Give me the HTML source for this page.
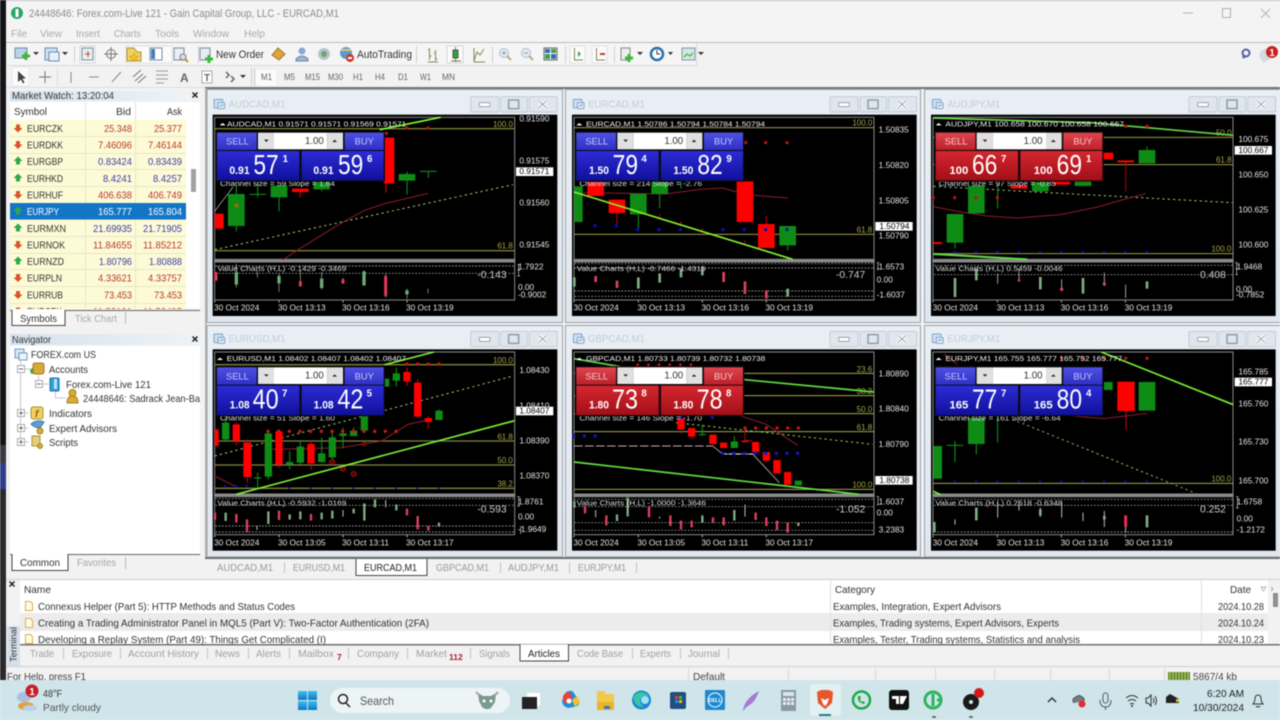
<!DOCTYPE html>
<html lang="en"><head><meta charset="utf-8"><title>Forex.com-Live 121</title>
<style>
html,body{margin:0;padding:0;background:#f2f2f2;width:1280px;height:720px;overflow:hidden}
svg{position:absolute;left:0;top:0;font-family:"Liberation Sans",sans-serif;filter:blur(.4px)}
.t{font-size:10.5px;fill:#333}
.g{font-size:10.5px;fill:#9a9a9a}
.m{font-size:10.5px;fill:#a9a9a9}
.ax{font-size:25px;fill:#e4e4e4}
.hd{font-size:23px;fill:#eee}
.vc{font-size:23px;fill:#ddd}
.val{font-size:31px;fill:#ccc}
.lb{font-size:24px;fill:#a6a64a}
.ti{font-size:29px;fill:#c3ccd5}
.cs{font-size:23px;fill:#ddd}
.pr{font-size:34px;fill:#fff;font-weight:bold;text-anchor:end}
.big{font-size:84px;fill:#fff}
.sup{font-size:29px;fill:#fff;font-weight:bold}
.btn{font-size:28px}
.r{fill:#b8392c;text-anchor:end}.b{fill:#3c3cab;text-anchor:end}
.w{fill:#fff}
.up{fill:#2fa84a}.dn{fill:#d9532c}
</style></head><body>
<svg width="1280" height="720" viewBox="0 0 1280 720" xmlns="http://www.w3.org/2000/svg">
<defs>
<linearGradient id="fr" x1="0" y1="0" x2="0" y2="1"><stop offset="0" stop-color="#e9eff5"/><stop offset="1" stop-color="#dfe6ee"/></linearGradient>
<linearGradient id="hdr" x1="0" y1="0" x2="1" y2="0"><stop offset="0" stop-color="#d5e2ee"/><stop offset="1" stop-color="#eef3f7"/></linearGradient>
<linearGradient id="bb" x1="0" y1="0" x2="0" y2="1"><stop offset="0" stop-color="#4f50e4"/><stop offset="1" stop-color="#2f30c4"/></linearGradient>
<linearGradient id="bl" x1="0" y1="0" x2="0" y2="1"><stop offset="0" stop-color="#2c2cd6"/><stop offset="1" stop-color="#10109c"/></linearGradient>
<linearGradient id="rb" x1="0" y1="0" x2="0" y2="1"><stop offset="0" stop-color="#dd4650"/><stop offset="1" stop-color="#bd2029"/></linearGradient>
<linearGradient id="rl" x1="0" y1="0" x2="0" y2="1"><stop offset="0" stop-color="#d52730"/><stop offset="1" stop-color="#a20f18"/></linearGradient>
<linearGradient id="win" x1="0" y1="0" x2="0" y2="1"><stop offset="0" stop-color="#3fc0f2"/><stop offset="1" stop-color="#1273c4"/></linearGradient>

<g id="wf">
<rect x="14" y="68" width="1034" height="604" fill="#000"/>
<rect x="20" y="76" width="900" height="426" fill="none" stroke="#8a8a8a" stroke-width="3"/>
<rect x="20" y="510" width="900" height="114" fill="none" stroke="#8a8a8a" stroke-width="3"/>
<rect x="18" y="503" width="904" height="6" fill="#8c8c8c"/>
<path d="M20 624v8M213 624v8M405 624v8M597 624v8" stroke="#aaa" stroke-width="3"/>
<g fill="#dfe6ee" stroke="#b4bdc7" stroke-width="2"><rect x="788" y="14" width="84" height="46" rx="3"/><rect x="878" y="14" width="80" height="46" rx="3"/><rect x="964" y="14" width="84" height="46" rx="3"/></g>
<rect x="814" y="32" width="32" height="12" fill="#fff" stroke="#98a2ac" stroke-width="3" rx="2"/>
<rect x="902" y="24" width="30" height="26" fill="none" stroke="#98a2ac" stroke-width="5"/>
<path d="M992 26l24 22M1016 26l-24 22" stroke="#fff" stroke-width="10"/><path d="M992 26l24 22M1016 26l-24 22" stroke="#9aa4ae" stroke-width="3"/>
<rect x="18" y="22" width="26" height="26" fill="#cfdff0" stroke="#7fa4c8" stroke-width="3" rx="2"/><rect x="30" y="32" width="20" height="18" fill="#e8f0f8" stroke="#7fa4c8" stroke-width="3" rx="2"/>
<path d="M35 44l4-5 3 3 4-5" stroke="#5f8fc0" fill="none" stroke-width="2"/>
</g>

<g id="pb">
<rect x="23" y="118" width="508" height="151" fill="#0a0a14"/>
<rect x="27" y="122" width="119" height="52" fill="url(#bb)"/><rect x="410" y="122" width="117" height="52" fill="url(#bb)"/>
<rect x="27" y="177" width="247" height="88" fill="url(#bl)"/><rect x="281" y="177" width="246" height="88" fill="url(#bl)"/>
<rect x="150" y="122" width="48" height="50" fill="#e0e0e0"/><rect x="198" y="122" width="160" height="50" fill="#fff"/><rect x="358" y="122" width="47" height="50" fill="#e0e0e0"/>
<path d="M168 143h14l-7 7zM373 150h14l-7-7z" fill="#222"/>
<text x="54" y="158" class="btn" fill="#c3c9f8">SELL</text><text x="440" y="158" class="btn" fill="#c3c9f8">BUY</text>
<text x="291" y="156" font-size="29" fill="#333">1.00</text>
</g>
<g id="pr">
<rect x="23" y="118" width="508" height="151" fill="#14080a"/>
<rect x="27" y="122" width="119" height="52" fill="url(#rb)"/><rect x="410" y="122" width="117" height="52" fill="url(#rb)"/>
<rect x="27" y="177" width="247" height="88" fill="url(#rl)"/><rect x="281" y="177" width="246" height="88" fill="url(#rl)"/>
<rect x="150" y="122" width="48" height="50" fill="#e0e0e0"/><rect x="198" y="122" width="160" height="50" fill="#fff"/><rect x="358" y="122" width="47" height="50" fill="#e0e0e0"/>
<path d="M168 143h14l-7 7zM373 150h14l-7-7z" fill="#222"/>
<text x="54" y="158" class="btn" fill="#f3c9cc">SELL</text><text x="440" y="158" class="btn" fill="#f3c9cc">BUY</text>
<text x="291" y="156" font-size="29" fill="#333">1.00</text>
</g>
<path id="aup" d="M0 -4.5L4.5 0H2V3.5H-2V0H-4.5Z"/>
<path id="adn" d="M0 4.5L4.5 0H2V-3.5H-2V0H-4.5Z"/>
</defs>

<!-- base -->
<rect width="1280" height="720" fill="#f2f2f2"/>
<rect x="0" y="0" width="6" height="445" fill="#141418"/><rect x="0" y="445" width="6" height="18" fill="#3a3a3e"/><rect x="0" y="463" width="6" height="26" fill="#2f3d8a"/><rect x="0" y="489" width="6" height="192" fill="#2a2a2e"/>
<rect x="6" y="0" width="1274" height="1" fill="#c4c4c4"/>
<rect x="6" y="1" width="1274" height="41" fill="#f4f4f4"/>
<rect x="6" y="42" width="1274" height="1" fill="#bdbdbd"/>

<!-- title -->
<circle cx="17" cy="13" r="6" fill="#27a866"/><path d="M17 9v8" stroke="#fff" stroke-width="3"/>
<text x="29" y="17" font-size="11" fill="#8c8c8c" textLength="310" lengthAdjust="spacingAndGlyphs">24448646: Forex.com-Live 121 - Gain Capital Group, LLC - EURCAD,M1</text>
<path d="M1183 13h10" stroke="#b5b5b5"/><rect x="1222.500" y="8.500" width="8" height="9" fill="none" stroke="#b0b0b0"/><path d="M1261 9l9 9M1270 9l-9 9" stroke="#b5b5b5"/>
<g>
<text x="11" y="37" class="m" textLength="16" lengthAdjust="spacingAndGlyphs">File</text>
<text x="40" y="37" class="m" textLength="22" lengthAdjust="spacingAndGlyphs">View</text>
<text x="76" y="37" class="m" textLength="24" lengthAdjust="spacingAndGlyphs">Insert</text>
<text x="114" y="37" class="m" textLength="27" lengthAdjust="spacingAndGlyphs">Charts</text>
<text x="155" y="37" class="m" textLength="24" lengthAdjust="spacingAndGlyphs">Tools</text>
<text x="193" y="37" class="m" textLength="36" lengthAdjust="spacingAndGlyphs">Window</text>
<text x="244" y="37" class="m" textLength="21" lengthAdjust="spacingAndGlyphs">Help</text>
</g>

<!-- toolbar 1 -->
<rect x="7" y="43" width="689" height="22" fill="#f5f5f5"/><path d="M696.500 43v22M7 65.500h690" stroke="#d8d8d8"/>
<g stroke="#d0d0d0"><path d="M74.500 46v17M198.500 46v17M416.500 46v17M492.500 46v17M565.500 46v17M614.500 46v17"/></g>
<rect x="80" y="46" width="15" height="17" fill="#fbfbfb" stroke="#d5d5d5"/><rect x="126" y="46" width="46" height="17" fill="#fbfbfb" stroke="#e0e0e0"/><rect x="447" y="46" width="16" height="17" fill="#fbfbfb" stroke="#d5d5d5"/><rect x="570" y="46" width="15" height="17" fill="#fbfbfb" stroke="#e0e0e0"/><rect x="592" y="46" width="15" height="17" fill="#fbfbfb" stroke="#e0e0e0"/>
<!-- new chart -->
<rect x="15" y="48" width="12" height="10" fill="#bcd3e8" stroke="#6a8db0"/><path d="M24.500 52h3v2.500h2.500v3h-2.500v2.500h-3v-2.500h-2.500v-3h2.500z" fill="#3fb83f"/>
<path d="M33 52h6l-3 3z" fill="#333"/>
<rect x="45" y="48" width="12" height="12" fill="#cfe0f0" stroke="#6a8db0"/><rect x="49" y="52" width="10" height="9" fill="#e8f0f8" stroke="#6a8db0"/><path d="M62 52h6l-3 3z" fill="#333"/>
<rect x="82" y="48" width="11" height="12" fill="#e8f0e8" stroke="#6a8db0"/><path d="M85 54h5M88 51v6" stroke="#c44"/>
<g fill="none" stroke="#777"><circle cx="111" cy="54" r="4.500"/><path d="M111 47v14M104 54h14"/></g>
<path d="M127 48h7l3 4h4v9h-14z" fill="#f0d060" stroke="#b09030"/><path d="M134 53l1.500 3 3 .4-2.200 2 .6 3-2.900-1.500-2.900 1.500.6-3-2.200-2 3-.4z" fill="#f3c030" stroke="#c09020" stroke-width=".5"/>
<rect x="150" y="48" width="12" height="12" fill="#fff" stroke="#6a8db0"/><rect x="151" y="49" width="4" height="10" fill="#4a7db0"/>
<rect x="174" y="48" width="10" height="12" fill="#e8eef4" stroke="#7a8a9a"/><circle cx="183" cy="57" r="3" fill="#dde" stroke="#7a7a7a"/><path d="M185 59l3 3" stroke="#c09030" stroke-width="2"/>
<rect x="200" y="48" width="10" height="12" fill="#e4ecf4" stroke="#7a8a9a"/><path d="M207.500 55h3v2.500h2.500v3h-2.500v2.500h-3v-2.500h-2.500v-3h2.500z" fill="#3fb83f"/>
<text x="216" y="58" font-size="11" fill="#333" textLength="48" lengthAdjust="spacingAndGlyphs">New Order</text>
<path d="M278 48l7 6-6 6-7-5z" fill="#dba53a" stroke="#a4742a"/>
<circle cx="302" cy="51" r="3.500" fill="#8aa8d8"/><path d="M296 59q6-6 12 0v2h-12z" fill="#9ab4dc" stroke="#6a86b0"/>
<circle cx="324" cy="54" r="6" fill="#b8c4c8"/><circle cx="324" cy="54" r="3" fill="#6da870"/>
<circle cx="346" cy="53" r="6" fill="#5a9ad0"/><path d="M341 50h10" stroke="#e0c870" stroke-width="2"/><circle cx="350" cy="58" r="4" fill="#c83a2a"/><rect x="348" y="57" width="4" height="2" fill="#fff"/>
<text x="357" y="58" font-size="11" fill="#333" textLength="55" lengthAdjust="spacingAndGlyphs">AutoTrading</text>
<g stroke="#8a8458" fill="none"><path d="M429.500 48v12M428 50h1.500M429.500 56h2M435.500 50v11M434 53h1.500M435.500 59h2M428 62h10"/></g>
<path d="M455.500 47v15M451 61h10" stroke="#7a7a50"/><rect x="453" y="50" width="5" height="8" fill="#2fa43a" stroke="#555"/>
<path d="M474 61l3-9 3 3 4-6M474 48v14h11" fill="none" stroke="#8a8458"/>
<g fill="#e4ecf2" stroke="#b0bcc8"><circle cx="504" cy="53" r="4.500"/><circle cx="526" cy="53" r="4.500"/></g><path d="M507 56l4 4M529 56l4 4" stroke="#c0a878" stroke-width="2"/><path d="M502 53h4M504 51v4M524 53h4" stroke="#7a9ab8"/>
<rect x="544" y="48" width="13" height="12" fill="#fff" stroke="#666"/><rect x="545" y="49" width="5" height="4" fill="#2f6fb0"/><rect x="551" y="49" width="5" height="4" fill="#3fa04a"/><rect x="545" y="54" width="5" height="5" fill="#3fa04a"/><rect x="551" y="54" width="5" height="5" fill="#2f6fb0"/>
<path d="M574.500 48v12M574 60h9" stroke="#8a8458" fill="none"/><path d="M578 51l3 3-3 3z" fill="#3fa04a"/>
<path d="M596.500 48v12M596 60h9" stroke="#8a8458" fill="none"/><path d="M600 54h5" stroke="#c33" stroke-width="2"/>
<rect x="621" y="48" width="9" height="12" fill="#eee" stroke="#888"/><path d="M627.500 54h3v2.500h2.500v3h-2.500v2.500h-3v-2.500h-2.500v-3h2.500z" fill="#3fb83f"/><path d="M637 52h6l-3 3z" fill="#333"/>
<circle cx="657" cy="54" r="6" fill="#fff" stroke="#2a72b0" stroke-width="2.500"/><path d="M657 50v4h3" stroke="#333" fill="none"/><path d="M668 52h5l-2.500 3z" fill="#333"/>
<rect x="682" y="48" width="13" height="12" fill="#d4e6d8" stroke="#7a9ab8"/><path d="M684 57l3-3 3 2 3-3" stroke="#3a9a4a" fill="none"/><path d="M698 52h6l-3 3z" fill="#333"/>
<circle cx="1246" cy="53" r="3.500" fill="none" stroke="#5560a8" stroke-width="2"/><path d="M1243 58l2-3" stroke="#5560a8" stroke-width="2.500"/>
<path d="M1262 60a6 6 0 1 1 4 1l-3 2z" fill="#d4dae2"/><circle cx="1272" cy="52" r="6" fill="#c81e1e"/><text x="1272" y="56" font-size="10" fill="#fff" font-weight="bold" text-anchor="middle">1</text>

<!-- toolbar 2 -->
<rect x="12" y="67" width="17" height="19" fill="#fbfbfb" stroke="#e8e8e8"/>
<path d="M18 71v11l3-2.500 2 4 1.500-1-2-4h3.500z" fill="#444"/>
<path d="M45 71v12M39 77h12" stroke="#777"/>
<path d="M57.500 68v18" stroke="#ddd"/>
<path d="M71 72v11M89 77h10M112 82l9-10" stroke="#888" fill="none"/>
<path d="M135 81l8-7M133 77l8-7M138 83l8-7" stroke="#777" fill="none"/><path d="M156 71h12M156 75h12M156 79h12M156 83h8" stroke="#999"/>
<text x="180" y="82" font-size="12" fill="#666" font-weight="bold">A</text>
<rect x="202" y="71" width="10" height="12" fill="#fff" stroke="#aaa"/><text x="204" y="81" font-size="10" fill="#666" font-weight="bold">T</text>
<path d="M226 72l3 3-3 3M231 76l3 3-3 3" fill="none" stroke="#666" stroke-width="1.500"/><path d="M240 75h6l-3 3z" fill="#333"/>
<rect x="255" y="69" width="22" height="17" fill="#fbfbfb" stroke="#ececec"/>
<path d="M251.500 68v18M254.500 68v18" stroke="#ccc"/>
<g font-size="9.500" fill="#666">
<text x="261" y="80" textLength="11" lengthAdjust="spacingAndGlyphs">M1</text>
<text x="284" y="80" textLength="11" lengthAdjust="spacingAndGlyphs">M5</text>
<text x="305" y="80" textLength="15" lengthAdjust="spacingAndGlyphs">M15</text>
<text x="328" y="80" textLength="15" lengthAdjust="spacingAndGlyphs">M30</text>
<text x="353" y="80" textLength="10" lengthAdjust="spacingAndGlyphs">H1</text>
<text x="375" y="80" textLength="10" lengthAdjust="spacingAndGlyphs">H4</text>
<text x="398" y="80" textLength="10" lengthAdjust="spacingAndGlyphs">D1</text>
<text x="420" y="80" textLength="11" lengthAdjust="spacingAndGlyphs">W1</text>
<text x="442" y="80" textLength="13" lengthAdjust="spacingAndGlyphs">MN</text>
</g>
<rect x="205" y="87" width="1075" height="2" fill="#777"/><rect x="6" y="87" width="199" height="1" fill="#ddd"/>

<!-- market watch -->
<rect x="205" y="88" width="1.500" height="470" fill="#b0b0b0"/>
<rect x="10" y="91" width="177" height="10" fill="url(#hdr)"/>
<text x="12" y="99" font-size="10.500" fill="#333" textLength="102" lengthAdjust="spacingAndGlyphs">Market Watch: 13:20:04</text>
<path d="M192.500 92.500l5 5M197.500 92.500l-5 5" stroke="#222" stroke-width="1.500"/>
<rect x="10" y="102" width="190" height="206" fill="#fff"/>
<rect x="10" y="120" width="176" height="190" fill="#fdfbd6"/>
<g stroke="#e9e7c8"><path d="M10 136.500h176M10 153.500h176M10 169.500h176M10 186.500h176M10 203.500h176M10 219.500h176M10 236.500h176M10 253.500h176M10 269.500h176M10 286.500h176M10 303.500h176"/><path d="M85.500 102v206M135.500 102v206"/></g>
<rect x="10" y="203" width="176" height="16.500" fill="#1375c6"/>
<rect x="191" y="169" width="5" height="23" fill="#a2a2a2"/>
<text x="14" y="115" class="t" textLength="33" lengthAdjust="spacingAndGlyphs">Symbol</text>
<text x="131" y="115" class="t" text-anchor="end" textLength="15" lengthAdjust="spacingAndGlyphs">Bid</text>
<text x="182" y="115" class="t" text-anchor="end" textLength="15" lengthAdjust="spacingAndGlyphs">Ask</text>
<use href="#adn" x="18" y="128" class="dn"/><use href="#adn" x="18" y="144.500" class="dn"/><use href="#aup" x="18" y="161" class="up"/><use href="#aup" x="18" y="178" class="up"/><use href="#adn" x="18" y="194.500" class="dn"/><use href="#aup" x="18" y="211" class="up"/><use href="#aup" x="18" y="228" class="up"/><use href="#adn" x="18" y="244.500" class="dn"/><use href="#aup" x="18" y="261" class="up"/><use href="#adn" x="18" y="277.500" class="dn"/><use href="#adn" x="18" y="294.500" class="dn"/><use href="#adn" x="18" y="311" class="dn"/>
<g font-size="10.500" fill="#333">
<text x="27" y="132" textLength="36" lengthAdjust="spacingAndGlyphs">EURCZK</text>
<text x="27" y="148.500" textLength="36" lengthAdjust="spacingAndGlyphs">EURDKK</text>
<text x="27" y="165" textLength="36" lengthAdjust="spacingAndGlyphs">EURGBP</text>
<text x="27" y="182" textLength="36" lengthAdjust="spacingAndGlyphs">EURHKD</text>
<text x="27" y="198.500" textLength="36" lengthAdjust="spacingAndGlyphs">EURHUF</text>
<text x="27" y="215" textLength="32" lengthAdjust="spacingAndGlyphs" fill="#fff">EURJPY</text>
<text x="27" y="232" textLength="39" lengthAdjust="spacingAndGlyphs">EURMXN</text>
<text x="27" y="248.500" textLength="38" lengthAdjust="spacingAndGlyphs">EURNOK</text>
<text x="27" y="265" textLength="37" lengthAdjust="spacingAndGlyphs">EURNZD</text>
<text x="27" y="281.500" textLength="35" lengthAdjust="spacingAndGlyphs">EURPLN</text>
<text x="27" y="298.500" textLength="36" lengthAdjust="spacingAndGlyphs">EURRUB</text>
<text x="27" y="315" textLength="35" lengthAdjust="spacingAndGlyphs">EURSEK</text>
</g>
<g font-size="10.500">
<text x="132" y="132" class="r" textLength="28" lengthAdjust="spacingAndGlyphs">25.348</text><text x="182" y="132" class="r" textLength="28" lengthAdjust="spacingAndGlyphs">25.377</text>
<text x="132" y="148.500" class="r" textLength="34" lengthAdjust="spacingAndGlyphs">7.46096</text><text x="182" y="148.500" class="r" textLength="34" lengthAdjust="spacingAndGlyphs">7.46144</text>
<text x="132" y="165" class="b" textLength="34" lengthAdjust="spacingAndGlyphs">0.83424</text><text x="182" y="165" class="b" textLength="34" lengthAdjust="spacingAndGlyphs">0.83439</text>
<text x="132" y="182" class="b" textLength="29" lengthAdjust="spacingAndGlyphs">8.4241</text><text x="182" y="182" class="b" textLength="29" lengthAdjust="spacingAndGlyphs">8.4257</text>
<text x="132" y="198.500" class="r" textLength="34" lengthAdjust="spacingAndGlyphs">406.638</text><text x="182" y="198.500" class="r" textLength="34" lengthAdjust="spacingAndGlyphs">406.749</text>
<text x="132" y="215" class="w" text-anchor="end" textLength="34" lengthAdjust="spacingAndGlyphs">165.777</text><text x="182" y="215" class="w" text-anchor="end" textLength="34" lengthAdjust="spacingAndGlyphs">165.804</text>
<text x="132" y="232" class="b" textLength="39" lengthAdjust="spacingAndGlyphs">21.69935</text><text x="182" y="232" class="b" textLength="39" lengthAdjust="spacingAndGlyphs">21.71905</text>
<text x="132" y="248.500" class="r" textLength="39" lengthAdjust="spacingAndGlyphs">11.84655</text><text x="182" y="248.500" class="r" textLength="39" lengthAdjust="spacingAndGlyphs">11.85212</text>
<text x="132" y="265" class="b" textLength="33" lengthAdjust="spacingAndGlyphs">1.80796</text><text x="182" y="265" class="b" textLength="33" lengthAdjust="spacingAndGlyphs">1.80888</text>
<text x="132" y="281.500" class="r" textLength="34" lengthAdjust="spacingAndGlyphs">4.33621</text><text x="182" y="281.500" class="r" textLength="34" lengthAdjust="spacingAndGlyphs">4.33757</text>
<text x="132" y="298.500" class="r" textLength="28" lengthAdjust="spacingAndGlyphs">73.453</text><text x="182" y="298.500" class="r" textLength="28" lengthAdjust="spacingAndGlyphs">73.453</text>
<text x="132" y="315" class="r" textLength="39" lengthAdjust="spacingAndGlyphs">11.52191</text><text x="182" y="315" class="r" textLength="39" lengthAdjust="spacingAndGlyphs">11.52495</text>
</g>
<rect x="6" y="309" width="199" height="22" fill="#f2f2f2"/>
<path d="M10 310.500h190" stroke="#666"/>
<path d="M12 310v15.500h53V310" fill="#fff" stroke="#444"/><rect x="13" y="309" width="51" height="3" fill="#fff"/>
<text x="20" y="322" font-size="10.500" fill="#333" textLength="37" lengthAdjust="spacingAndGlyphs">Symbols</text>
<text x="75" y="322" font-size="10.500" fill="#a8a8a8" textLength="42" lengthAdjust="spacingAndGlyphs">Tick Chart</text><path d="M125.500 312v12" stroke="#bbb"/>

<!-- navigator -->
<rect x="10" y="334" width="190" height="11" fill="url(#hdr)"/>
<text x="12" y="343" font-size="10.500" fill="#333" textLength="39" lengthAdjust="spacingAndGlyphs">Navigator</text>
<path d="M192.500 336.500l5 5M197.500 336.500l-5 5" stroke="#222" stroke-width="1.500"/>
<rect x="10" y="346" width="190" height="208" fill="#fff"/>
<path d="M20.500 360v82M20.500 369h10M38.500 375v9M38.500 384h10M55.500 390v8h10M20.500 413h8M20.500 428h8M20.500 442h8" stroke="#c8c8c8" fill="none"/>
<rect x="15" y="349" width="9" height="9" fill="#d8e6f4" stroke="#6f9cc8"/><rect x="19" y="353" width="8" height="7" fill="#eef4fa" stroke="#6f9cc8"/>
<g fill="#fff" stroke="#aaa"><rect x="17.500" y="365.500" width="7" height="7"/><rect x="17.500" y="409.500" width="7" height="7"/><rect x="17.500" y="424.500" width="7" height="7"/><rect x="17.500" y="438.500" width="7" height="7"/><rect x="35.500" y="380.500" width="7" height="7"/></g>
<path d="M19 369h4M19 413h4M21 411v4M19 428h4M21 426v4M19 442h4M21 440v4M37 384h4" stroke="#666"/>
<circle cx="33" cy="371" r="3" fill="#3fae3f"/><rect x="33" y="363" width="11" height="11" rx="2" fill="#d8a83a" stroke="#a87a20"/>
<rect x="50" y="378" width="9" height="13" rx="1" fill="#2fa0dc" stroke="#1a70a8"/><rect x="54" y="379" width="3" height="10" fill="#bfe4f8"/>
<path d="M67 403q0-7 5.500-7t5.500 7z" fill="#d8ac34" stroke="#a88020"/><circle cx="72.500" cy="393" r="3.500" fill="#d8ac34" stroke="#a88020"/>
<rect x="31" y="407" width="12" height="12" rx="2" fill="#f0d060" stroke="#a8903a"/><text x="35" y="417" font-size="10" font-style="italic" font-weight="bold" fill="#8a6a10">f</text>
<path d="M31 424q6-5 13-2l-4 6q-5 0-9-4z" fill="#5aa0d0" stroke="#3a76a8"/><circle cx="40" cy="431" r="3" fill="#d8ac34" stroke="#a88020"/>
<rect x="32" y="436" width="8" height="10" fill="#e4cf80" stroke="#a8903a"/><circle cx="40" cy="446" r="2.500" fill="#d8ac34" stroke="#a88020"/>
<g font-size="10.500" fill="#333">
<text x="31" y="358" textLength="65" lengthAdjust="spacingAndGlyphs">FOREX.com US</text>
<text x="49" y="373" textLength="39" lengthAdjust="spacingAndGlyphs">Accounts</text>
<text x="66" y="388" textLength="85" lengthAdjust="spacingAndGlyphs">Forex.com-Live 121</text>
<text x="83" y="402" textLength="117" lengthAdjust="spacingAndGlyphs">24448646: Sadrack Jean-Ba</text>
<text x="49" y="417" textLength="43" lengthAdjust="spacingAndGlyphs">Indicators</text>
<text x="49" y="432" textLength="68" lengthAdjust="spacingAndGlyphs">Expert Advisors</text>
<text x="49" y="446" textLength="29" lengthAdjust="spacingAndGlyphs">Scripts</text>
</g>
<path d="M10 554.500h190" stroke="#666"/>
<path d="M12 554v16.500h56V554" fill="#fff" stroke="#444"/><rect x="13" y="553" width="54" height="3" fill="#fff"/>
<text x="20" y="566" font-size="10.500" fill="#333" textLength="40" lengthAdjust="spacingAndGlyphs">Common</text>
<text x="77" y="566" font-size="10.500" fill="#a8a8a8" textLength="39" lengthAdjust="spacingAndGlyphs">Favorites</text><path d="M125.500 557v12" stroke="#bbb"/>

<!-- window frames -->
<g fill="url(#fr)" stroke="#9aa2aa">
<rect x="207" y="89.500" width="355.500" height="233"/><rect x="565.500" y="89.500" width="355" height="233"/><rect x="924.500" y="89.500" width="356" height="233"/>
<rect x="207" y="325.500" width="355.500" height="231.500"/><rect x="565.500" y="325.500" width="355" height="231.500"/><rect x="924.500" y="325.500" width="356" height="231.500"/>
</g>

<!-- CHART 1 -->
<g transform="translate(208 92) scale(.33333)">
<use href="#wf"/>
<text x="62" y="46" class="ti">AUDCAD,M1</text>
<path d="M20 110h900M20 476h900" stroke="#7c7c36" stroke-width="4"/>
<text x="855" y="105" class="lb">100.0</text><text x="868" y="470" class="lb">61.8</text>
<path d="M20 473L915 278" stroke="#9cc870" stroke-width="3" stroke-dasharray="7 9"/>
<path d="M225 503L275 470 340 430 400 393 470 355 530 335 660 304" stroke="#8e1b2e" stroke-width="3" fill="none"/>
<path d="M20 358L75 285" stroke="#bbb" stroke-width="2"/>
<path d="M534 274v28M277 300v16" stroke="#e00" stroke-width="3"/>
<path d="M20 365h27v45h-27zM527 137h32v137h-32zM252 290h50v10h-50z" fill="#f00"/>
<path d="M85 280v138M213 316v42M341 260v38M597 238v70M149 275v41M124 307h50M636 238h50M661 238v20" stroke="#0d9a1a" stroke-width="3" fill="none"/>
<path d="M60 306h50v96h-50zM188 281h50v35h-50zM316 270h50v22h-50zM572 246h50v20h-50z" fill="#0e8c16"/>
<circle cx="85" cy="341" r="6" fill="#a06a10"/>
<circle cx="597" cy="108" r="5" fill="#c01010"/><circle cx="660" cy="108" r="5" fill="#c01010"/><circle cx="535" cy="124" r="5" fill="#c01010"/>
<path d="M515 113L698 76" stroke="#7dff30" stroke-width="5"/>
<text x="36" y="282" class="cs" textLength="345" lengthAdjust="spacingAndGlyphs">Channel size = 59 Slope = 1.64</text>
<path d="M35 100l9-7 9 7z" fill="#fff"/>
<text x="57" y="103" class="hd" textLength="538" lengthAdjust="spacingAndGlyphs">AUDCAD,M1   0.91571 0.91571 0.91569 0.91571</text>
<use href="#pb"/>
<text x="125" y="246" class="pr" textLength="61" lengthAdjust="spacingAndGlyphs">0.91</text><text x="136" y="246" class="big" textLength="76" lengthAdjust="spacingAndGlyphs">57</text><text x="224" y="210" class="sup">1</text>
<text x="377" y="246" class="pr" textLength="61" lengthAdjust="spacingAndGlyphs">0.91</text><text x="390" y="246" class="big" textLength="76" lengthAdjust="spacingAndGlyphs">59</text><text x="477" y="210" class="sup">6</text>
<path d="M22 522h896M22 544h896" stroke="#ccc" stroke-width="2" stroke-dasharray="5 5"/>
<path d="M85 515v72M148 535v22M213 545v55M277 535v50M341 540v52M405 558v18M468 535v47M533 545v71M597 590v30M660 590v14" stroke="#a8b8a8" stroke-width="2"/>
<path d="M85 540v38M213 552v22M341 560v28M468 538v42M597 595v12" stroke="#6faa78" stroke-width="10"/>
<path d="M24 540v26M277 568v14M405 562v12M533 552v60" stroke="#e8385a" stroke-width="9"/>
<text x="28" y="537" class="vc" textLength="387" lengthAdjust="spacingAndGlyphs">Value Charts (H,L) -0.1429 -0.3469</text>
<text x="808" y="558" class="val">-0.143</text>
<path d="M932 518v34M928 518h8M928 534h8M928 552h8" stroke="#ccc" stroke-width="2"/>
<text x="930" y="532" class="ax">1.7922</text><text x="930" y="594" class="ax">0.00</text><text x="930" y="617" class="ax">-0.9002</text>
<text x="934" y="88" class="ax">0.91590</text><text x="934" y="214" class="ax">0.91575</text><text x="934" y="340" class="ax">0.91560</text><text x="934" y="467" class="ax">0.91545</text>
<rect x="924" y="226" width="112" height="26" fill="#fff"/><text x="934" y="246" class="ax" style="fill:#000">0.91571</text>
<text x="18" y="656" class="ax">30 Oct 2024</text><text x="210" y="656" class="ax">30 Oct 13:13</text><text x="402" y="656" class="ax">30 Oct 13:16</text><text x="594" y="656" class="ax">30 Oct 13:19</text>
</g>

<!-- CHART 2 -->
<g transform="translate(566 92) scale(.33333)">
<use href="#wf" x="4"/>
<text x="66" y="46" class="ti">EURCAD,M1</text>
<path d="M24 107h900M24 427h900" stroke="#b4b456" stroke-width="2.500"/>
<text x="859" y="101" class="lb">100.0</text><text x="872" y="421" class="lb">61.8</text>
<path d="M50 302L300 306 400 292 470 288 540 308 665 318" stroke="#8e1b2e" stroke-width="3" fill="none"/>
<path d="M153 363v32M281 366v10M345 388v8M409 408v8M601 372v24M537 445v10" stroke="#c00" stroke-width="3"/>
<path d="M64 270h50v42h-50zM128 323h50v40h-50zM512 268h50v122h-50zM576 396h50v72h-50z" fill="#f00"/>
<path d="M217 367v43M281 306v42M345 270v20M665 460v15" stroke="#0d9a1a" stroke-width="3"/>
<path d="M24 283h26v107h-26zM192 305h50v62h-50zM256 270h50v36h-50zM640 402h50v58h-50z" fill="#0e8c16"/>
<g fill="#0c0cc0"><circle cx="87" cy="401" r="5"/><circle cx="151" cy="401" r="5"/><circle cx="215" cy="413" r="5"/><circle cx="279" cy="413" r="5"/><circle cx="343" cy="413" r="5"/><circle cx="471" cy="413" r="5"/><circle cx="535" cy="413" r="5"/><circle cx="599" cy="413" r="5"/><circle cx="663" cy="413" r="5"/></g>
<g fill="#c01010"><circle cx="539" cy="152" r="5"/><circle cx="599" cy="152" r="5"/><circle cx="663" cy="152" r="5"/></g>
<path d="M24 300L680 502" stroke="#86ee2c" stroke-width="5"/>
<text x="40" y="282" class="cs" textLength="368" lengthAdjust="spacingAndGlyphs">Channel size = 214 Slope = -2.76</text>
<path d="M31 100l9-7 9 7z" fill="#fff"/>
<text x="60" y="103" class="hd" textLength="537" lengthAdjust="spacingAndGlyphs">EURCAD,M1   1.50786 1.50794 1.50784 1.50794</text>
<use href="#pb" x="4"/>
<text x="129" y="246" class="pr" textLength="60" lengthAdjust="spacingAndGlyphs">1.50</text><text x="140" y="246" class="big" textLength="76" lengthAdjust="spacingAndGlyphs">79</text><text x="226" y="210" class="sup">4</text>
<text x="382" y="246" class="pr" textLength="60" lengthAdjust="spacingAndGlyphs">1.50</text><text x="394" y="246" class="big" textLength="76" lengthAdjust="spacingAndGlyphs">82</text><text x="481" y="210" class="sup">9</text>
<path d="M26 515h896M26 528h896M26 597h896M26 613h896" stroke="#ccc" stroke-width="2" stroke-dasharray="5 5"/>
<path d="M281 544v28M345 530v26M409 525v25M217 556v34M25 556v28M665 590v24" stroke="#7fae84" stroke-width="8"/>
<path d="M89 552v18M153 566v22M473 540v30M537 568v38M601 595v25" stroke="#e0405e" stroke-width="8"/>
<text x="32" y="537" class="vc" textLength="387" lengthAdjust="spacingAndGlyphs">Value Charts (H,L) -0.7466 -1.4315</text>
<text x="810" y="558" class="val">-0.747</text>
<text x="938" y="532" class="ax">1.6573</text><text x="932" y="572" class="ax">0.00</text><text x="932" y="616" class="ax">-1.6037</text>
<path d="M936 512v24M932 512h8M932 530h8" stroke="#ccc" stroke-width="2"/>
<text x="938" y="122" class="ax">1.50835</text><text x="938" y="228" class="ax">1.50820</text><text x="938" y="334" class="ax">1.50805</text><text x="938" y="440" class="ax">1.50790</text>
<rect x="928" y="390" width="112" height="26" fill="#fff"/><text x="940" y="411" class="ax" style="fill:#000">1.50794</text>
<text x="22" y="656" class="ax">30 Oct 2024</text><text x="214" y="656" class="ax">30 Oct 13:13</text><text x="406" y="656" class="ax">30 Oct 13:16</text><text x="598" y="656" class="ax">30 Oct 13:19</text>
</g>

<!-- CHART 3 -->
<g transform="translate(924 92) scale(.33333)">
<use href="#wf" x="7"/>
<text x="70" y="46" class="ti">AUDJPY,M1</text>
<path d="M28 136h900M28 218h900M28 485h900" stroke="#9a9a48" stroke-width="3"/>
<text x="876" y="130" class="lb">50.0</text><text x="876" y="212" class="lb">61.8</text><text x="862" y="479" class="lb">100.0</text>
<path d="M28 283L925 332" stroke="#9cc870" stroke-width="3" stroke-dasharray="7 9"/>
<path d="M28 344L100 358 190 372 280 378 410 368 520 345 600 322 665 305" stroke="#8e1b2e" stroke-width="3" fill="none"/>
<path d="M28 78L500 92 928 130" stroke="#66d84a" stroke-width="5" fill="none"/>
<path d="M28 486L310 502" stroke="#66d84a" stroke-width="6"/>
<path d="M605 205v93" stroke="#b00" stroke-width="3"/><path d="M221 275v75M93 452v18M669 164v10" stroke="#0d9a1a" stroke-width="3"/>
<path d="M28 450h26v6h-26zM260 280h50v10h-50zM388 268h50v10h-50zM536 182h32v20h-32zM580 205h50v6h-50z" fill="#f00"/>
<path d="M68 366h50v86h-50zM132 282h50v82h-50zM324 270h50v28h-50zM452 268h50v14h-50zM644 174h50v40h-50z" fill="#0e8c16"/>
<g fill="#c01010"><circle cx="28" cy="317" r="5"/><circle cx="92" cy="317" r="5"/><circle cx="156" cy="317" r="5"/><circle cx="220" cy="317" r="5"/><circle cx="605" cy="103" r="5"/><circle cx="669" cy="103" r="5"/></g>
<g fill="#0c0cb0"><circle cx="92" cy="480" r="4"/><circle cx="156" cy="480" r="4"/><circle cx="220" cy="480" r="4"/><circle cx="284" cy="480" r="4"/><circle cx="348" cy="480" r="4"/><circle cx="412" cy="480" r="4"/><circle cx="476" cy="480" r="4"/><circle cx="540" cy="480" r="4"/><circle cx="604" cy="480" r="4"/><circle cx="668" cy="480" r="4"/></g>
<text x="44" y="282" class="cs" textLength="352" lengthAdjust="spacingAndGlyphs">Channel size = 97 Slope = -0.85</text>
<path d="M35 100l9-7 9 7z" fill="#fff"/>
<text x="64" y="103" class="hd" textLength="536" lengthAdjust="spacingAndGlyphs">AUDJPY,M1   100.658 100.670 100.658 100.667</text>
<use href="#pr" x="8"/>
<text x="133" y="246" class="pr">100</text><text x="144" y="246" class="big" textLength="76" lengthAdjust="spacingAndGlyphs">66</text><text x="231" y="210" class="sup">7</text>
<text x="386" y="246" class="pr">100</text><text x="398" y="246" class="big" textLength="76" lengthAdjust="spacingAndGlyphs">69</text><text x="486" y="210" class="sup">1</text>
<path d="M30 520h896M30 548h896" stroke="#ccc" stroke-width="2" stroke-dasharray="5 5"/>
<path d="M221 545v30M285 530v35M413 562v33M541 542v40M605 578v40" stroke="#bbb" stroke-width="2.500"/>
<path d="M93 558v57M157 530v35M349 555v37M477 558v47M669 568v22" stroke="#7fae84" stroke-width="8"/>
<g fill="#e0405e"><circle cx="285" cy="565" r="4"/><circle cx="413" cy="592" r="5"/><circle cx="541" cy="576" r="5"/></g>
<text x="34" y="537" class="vc" textLength="382" lengthAdjust="spacingAndGlyphs">Value Charts (H,L) 0.5459 -0.0046</text>
<text x="828" y="558" class="val">0.408</text>
<text x="938" y="532" class="ax">1.9468</text><text x="936" y="600" class="ax">0.00</text><text x="936" y="617" class="ax">-0.7852</text>
<path d="M938 512v36M934 512h8M934 530h8M934 548h8" stroke="#ccc" stroke-width="2"/>
<text x="943" y="150" class="ax">100.675</text><text x="943" y="256" class="ax">100.650</text><text x="943" y="362" class="ax">100.625</text><text x="943" y="467" class="ax">100.600</text>
<rect x="932" y="162" width="112" height="26" fill="#fff"/><text x="943" y="183" class="ax" style="fill:#000">100.667</text>
<text x="26" y="656" class="ax">30 Oct 2024</text><text x="218" y="656" class="ax">30 Oct 13:13</text><text x="410" y="656" class="ax">30 Oct 13:16</text><text x="602" y="656" class="ax">30 Oct 13:19</text>
</g>

<!-- CHART 4 -->
<g transform="translate(208 326) scale(.33333)">
<use href="#wf" y="2"/>
<text x="62" y="48" class="ti">EURUSD,M1</text>
<path d="M20 116h900M20 345h900M20 417h900M20 487h900" stroke="#83833c" stroke-width="4"/>
<text x="855" y="111" class="lb">100.0</text><text x="868" y="340" class="lb">61.8</text><text x="868" y="411" class="lb">50.0</text><text x="868" y="482" class="lb">38.2</text>
<path d="M20 390L915 150" stroke="#9cc870" stroke-width="3" stroke-dasharray="7 9"/>
<path d="M20 450L80 480M170 370L300 368 400 365 520 345 560 320 600 295 660 282" stroke="#8e1b2e" stroke-width="3" fill="none"/>
<g fill="#0c0cb0"><circle cx="52" cy="480" r="4"/><circle cx="84" cy="480" r="4"/><circle cx="116" cy="480" r="4"/><circle cx="244" cy="487" r="3"/><circle cx="308" cy="487" r="3"/><circle cx="372" cy="487" r="3"/><circle cx="436" cy="487" r="3"/><circle cx="500" cy="487" r="3"/><circle cx="564" cy="487" r="3"/><circle cx="628" cy="487" r="3"/><circle cx="692" cy="487" r="3"/></g>
<path d="M118 340v130M213 310v115M309 345v85M629 160v115M661 270v38M597 125v55M85 290v68" stroke="#d00" stroke-width="3"/>
<path d="M149 440v50M138 456h22M181 310v150M245 375v55M277 345v70M341 335v75M373 320v80M405 305v60M437 305v25M469 250v60M565 125v57M693 250v30M53 270v75" stroke="#0d9a1a" stroke-width="3" fill="none"/>
<path d="M20 310h12v50h-12zM74 295h22v50h-22zM106 350h24v103h-24zM202 316h22v100h-22zM298 354h22v58h-22zM586 138h22v28h-22zM618 170h22v102h-22zM650 276h22v12h-22z" fill="#f00"/>
<path d="M42 290h22v50h-22zM170 322h22v130h-22zM234 408h22v8h-22zM266 362h22v48h-22zM330 382h22v26h-22zM362 334h22v60h-22zM394 322h22v8h-22zM426 314h22v16h-22zM458 270h22v44h-22zM530 158h14v24h-14zM554 142h22v22h-22zM682 254h22v28h-22z" fill="#0e8c16"/>
<g fill="#d41414"><circle cx="180" cy="316" r="5"/><circle cx="212" cy="316" r="5"/><circle cx="244" cy="316" r="5"/><circle cx="276" cy="316" r="5"/><circle cx="308" cy="316" r="5"/><circle cx="340" cy="316" r="5"/><circle cx="372" cy="316" r="5"/><circle cx="404" cy="316" r="5"/><circle cx="436" cy="316" r="5"/><circle cx="468" cy="316" r="5"/><circle cx="500" cy="316" r="5"/><circle cx="532" cy="316" r="5"/><circle cx="564" cy="316" r="5"/><circle cx="597" cy="114" r="5"/><circle cx="629" cy="114" r="5"/><circle cx="661" cy="114" r="5"/><circle cx="693" cy="114" r="5"/></g>
<g fill="#600" stroke="#a01818" stroke-width="2"><circle cx="373" cy="408" r="8"/><circle cx="405" cy="428" r="8"/><circle cx="437" cy="444" r="8"/><circle cx="469" cy="354" r="6"/></g>
<path d="M85 505L920 284M530 116L678 78" stroke="#7bf038" stroke-width="5"/>
<text x="36" y="284" class="cs" textLength="345" lengthAdjust="spacingAndGlyphs">Channel size = 51 Slope = 1.60</text>
<path d="M27 102l9-7 9 7z" fill="#fff"/>
<text x="56" y="105" class="hd" textLength="538" lengthAdjust="spacingAndGlyphs">EURUSD,M1   1.08402 1.08407 1.08402 1.08407</text>
<use href="#pb" y="2"/>
<text x="125" y="248" class="pr" textLength="60" lengthAdjust="spacingAndGlyphs">1.08</text><text x="134" y="248" class="big" textLength="78" lengthAdjust="spacingAndGlyphs">40</text><text x="222" y="212" class="sup">7</text>
<text x="377" y="248" class="pr" textLength="60" lengthAdjust="spacingAndGlyphs">1.08</text><text x="388" y="248" class="big" textLength="78" lengthAdjust="spacingAndGlyphs">42</text><text x="476" y="212" class="sup">5</text>
<path d="M22 518h896M22 538h896M22 600h896M22 618h896" stroke="#ccc" stroke-width="2" stroke-dasharray="5 5"/>
<path d="M53 560v25M181 556v38M245 565v16M277 556v24M341 560v20M373 554v24M437 548v14M469 532v52M501 520v24M565 535v18M693 590v12" stroke="#7fae84" stroke-width="7"/>
<path d="M21 560v22M85 564v26M117 580v38M213 554v28M309 564v20M597 548v20M629 570v40M661 600v14" stroke="#e0405e" stroke-width="7"/>
<path d="M147 600v12M405 552v20M533 522v22" stroke="#bbb" stroke-width="3"/>
<text x="28" y="539" class="vc" textLength="387" lengthAdjust="spacingAndGlyphs">Value Charts (H,L) -0.5932 -1.0169</text>
<text x="808" y="560" class="val">-0.593</text>
<text x="930" y="535" class="ax">1.8761</text><text x="930" y="581" class="ax">0.00</text><text x="930" y="618" class="ax">-1.9649</text>
<path d="M932 512v28M928 512h8M928 540h8M938 600v24" stroke="#ccc" stroke-width="2"/>
<text x="934" y="141" class="ax">1.08430</text><text x="934" y="247" class="ax">1.08410</text><text x="934" y="352" class="ax">1.08390</text><text x="934" y="458" class="ax">1.08370</text>
<rect x="924" y="242" width="112" height="26" fill="#fff"/><text x="934" y="263" class="ax" style="fill:#000">1.08407</text>
<text x="18" y="658" class="ax">30 Oct 2024</text><text x="210" y="658" class="ax">30 Oct 13:05</text><text x="402" y="658" class="ax">30 Oct 13:11</text><text x="594" y="658" class="ax">30 Oct 13:17</text>
</g>

<!-- CHART 5 -->
<g transform="translate(566 326) scale(.33333)">
<use href="#wf" x="4" y="2"/>
<text x="66" y="48" class="ti">GBPCAD,M1</text>
<path d="M24 142h900M24 209h900M24 263h900M24 317h900M24 490h900" stroke="#a8a84e" stroke-width="3"/>
<text x="872" y="138" class="lb">23.6</text><text x="872" y="204" class="lb">38.2</text><text x="872" y="258" class="lb">50.0</text><text x="872" y="312" class="lb">61.8</text><text x="859" y="485" class="lb">100.0</text>
<path d="M330 290L920 355" stroke="#8fcf60" stroke-width="3" stroke-dasharray="7 9"/>
<path d="M510 265L600 295 695 358" stroke="#8e1b2e" stroke-width="3" fill="none"/>
<path d="M24 360H440" stroke="#c9a8b0" stroke-width="3" stroke-dasharray="26 7"/>
<path d="M440 360L470 384H560L640 470" stroke="#a89098" stroke-width="3" fill="none"/>
<path d="M470 384h90" stroke="#fff" stroke-width="3" stroke-dasharray="12 8"/>
<path d="M24 98L210 130 924 198M24 408L880 505" stroke="#5fe040" stroke-width="5" fill="none"/>
<path d="M537 310v40M345 310v14M377 332v8M441 354v6M601 404v6M569 378v6M537 344h22" stroke="#b00" stroke-width="3"/><path d="M505 330v16M409 296v32M398 326h22" stroke="#0d9a1a" stroke-width="3"/>
<path d="M334 278h22v32h-22zM366 306h22v26h-22zM430 326h22v28h-22zM462 350h22v16h-22zM558 348h22v30h-22zM590 378h22v26h-22zM622 402h22v40h-22zM654 438h22v38h-22zM526 344h22v4h-22z" fill="#f00"/>
<path d="M494 346h22v20h-22zM686 464h22v14h-22z" fill="#0e8c16"/>
<g fill="#d41414"><circle cx="537" cy="306" r="5"/><circle cx="569" cy="306" r="5"/><circle cx="601" cy="306" r="5"/><circle cx="633" cy="306" r="5"/><circle cx="665" cy="306" r="5"/><circle cx="697" cy="306" r="5"/><circle cx="215" cy="116" r="4"/><circle cx="247" cy="116" r="4"/><circle cx="279" cy="116" r="4"/><circle cx="311" cy="116" r="4"/><circle cx="343" cy="116" r="4"/><circle cx="375" cy="116" r="4"/></g>
<g fill="#1414d0"><circle cx="24" cy="330" r="5"/><circle cx="55" cy="330" r="5"/><circle cx="87" cy="330" r="5"/><circle cx="439" cy="274" r="5"/><circle cx="344" cy="274" r="5"/><circle cx="471" cy="382" r="5"/><circle cx="503" cy="382" r="5"/><circle cx="535" cy="382" r="5"/><circle cx="567" cy="382" r="5"/><circle cx="599" cy="382" r="5"/><circle cx="631" cy="382" r="5"/><circle cx="663" cy="382" r="5"/><circle cx="695" cy="382" r="5"/></g>
<text x="40" y="284" class="cs" textLength="368" lengthAdjust="spacingAndGlyphs">Channel size = 146 Slope = -1.70</text>
<path d="M31 102l9-7 9 7z" fill="#fff"/>
<text x="60" y="105" class="hd" textLength="538" lengthAdjust="spacingAndGlyphs">GBPCAD,M1   1.80733 1.80739 1.80732 1.80738</text>
<use href="#pr" x="4" y="2"/>
<text x="129" y="248" class="pr" textLength="60" lengthAdjust="spacingAndGlyphs">1.80</text><text x="138" y="248" class="big" textLength="78" lengthAdjust="spacingAndGlyphs">73</text><text x="226" y="212" class="sup">8</text>
<text x="382" y="248" class="pr" textLength="60" lengthAdjust="spacingAndGlyphs">1.80</text><text x="392" y="248" class="big" textLength="78" lengthAdjust="spacingAndGlyphs">78</text><text x="480" y="212" class="sup">8</text>
<path d="M26 520h896M26 542h896M26 590h896M26 613h896" stroke="#ccc" stroke-width="2" stroke-dasharray="5 5"/>
<path d="M25 525v20M185 515v56M153 565v20M409 568v22M505 552v32M697 590v10" stroke="#7fae84" stroke-width="7"/>
<path d="M57 540v22M121 568v30M249 540v34M313 568v32M345 584v26M377 584v20M441 574v16M473 574v24M569 560v22M601 574v26M633 584v28M665 590v30" stroke="#e0405e" stroke-width="7"/>
<path d="M89 552v22M281 572v6M537 536v36" stroke="#bbb" stroke-width="3"/>
<text x="32" y="539" class="vc" textLength="388" lengthAdjust="spacingAndGlyphs">Value Charts (H,L) -1.0000 -1.3646</text>
<text x="810" y="560" class="val">-1.052</text>
<text x="938" y="535" class="ax">1.6037</text><text x="932" y="568" class="ax">0.00</text><text x="938" y="620" class="ax">3.2383</text>
<path d="M936 512v24M932 512h8M932 536h8" stroke="#ccc" stroke-width="2"/>
<text x="938" y="151" class="ax">1.80890</text><text x="938" y="257" class="ax">1.80840</text><text x="938" y="363" class="ax">1.80790</text>
<rect x="928" y="450" width="112" height="26" fill="#fff"/><text x="940" y="471" class="ax" style="fill:#000">1.80738</text>
<text x="22" y="658" class="ax">30 Oct 2024</text><text x="214" y="658" class="ax">30 Oct 13:05</text><text x="406" y="658" class="ax">30 Oct 13:11</text><text x="598" y="658" class="ax">30 Oct 13:17</text>
</g>

<!-- CHART 6 -->
<g transform="translate(924 326) scale(.33333)">
<use href="#wf" x="7" y="2"/>
<text x="70" y="48" class="ti">EURJPY,M1</text>
<path d="M28 472h900" stroke="#a8a84e" stroke-width="3"/>
<text x="862" y="466" class="lb">100.0</text>
<path d="M265 280L815 502" stroke="#7fb860" stroke-width="3" stroke-dasharray="7 9"/>
<path d="M445 270L540 278 670 262" stroke="#8e1b2e" stroke-width="3" fill="none"/>
<path d="M60 84L100 115" stroke="#8e1b2e" stroke-width="3"/>
<path d="M532 78L928 236M28 496L50 506" stroke="#76f032" stroke-width="5"/>
<path d="M606 255v58" stroke="#c00" stroke-width="3"/>
<path d="M93 345v63M68 358h50M157 354v31M221 275v75" stroke="#0d9a1a" stroke-width="3" fill="none"/>
<path d="M28 360h26v98h-26zM132 276h50v78h-50zM540 168h26v24h-26zM644 168h50v86h-50z" fill="#0e8c16"/>
<rect x="580" y="167" width="52" height="88" fill="#f00"/>
<g fill="#c01010"><circle cx="413" cy="97" r="5"/><circle cx="477" cy="97" r="5"/><circle cx="541" cy="97" r="5"/><circle cx="605" cy="97" r="5"/><circle cx="669" cy="97" r="5"/></g>
<g fill="#0a0a90"><circle cx="92" cy="466" r="4"/><circle cx="156" cy="466" r="4"/><circle cx="220" cy="466" r="4"/><circle cx="284" cy="466" r="4"/><circle cx="348" cy="466" r="4"/><circle cx="412" cy="466" r="4"/><circle cx="476" cy="466" r="4"/><circle cx="540" cy="466" r="4"/><circle cx="604" cy="466" r="4"/><circle cx="668" cy="466" r="4"/></g>
<text x="44" y="284" class="cs" textLength="366" lengthAdjust="spacingAndGlyphs">Channel size = 161 Slope = -6.64</text>
<path d="M35 102l9-7 9 7z" fill="#fff"/>
<text x="64" y="105" class="hd" textLength="531" lengthAdjust="spacingAndGlyphs">EURJPY,M1   165.755 165.777 165.752 165.777</text>
<use href="#pb" x="8" y="2"/>
<text x="133" y="248" class="pr">165</text><text x="144" y="248" class="big" textLength="76" lengthAdjust="spacingAndGlyphs">77</text><text x="231" y="212" class="sup">7</text>
<text x="386" y="248" class="pr">165</text><text x="398" y="248" class="big" textLength="76" lengthAdjust="spacingAndGlyphs">80</text><text x="486" y="212" class="sup">4</text>
<path d="M30 520h896M30 538h896M30 618h896" stroke="#ccc" stroke-width="2" stroke-dasharray="5 5"/>
<path d="M93 580v16M221 530v45M285 530v24M349 545v28M413 530v45M477 560v25M541 555v48M605 590v30" stroke="#bbb" stroke-width="3"/>
<path d="M157 545v38M349 550v18M541 570v10M669 568v36M31 588v30" stroke="#7fae84" stroke-width="8"/>
<path d="M605 568v34" stroke="#e8304e" stroke-width="9"/>
<text x="34" y="539" class="vc" textLength="382" lengthAdjust="spacingAndGlyphs">Value Charts (H,L) 0.2518 -0.6348</text>
<text x="828" y="560" class="val">0.252</text>
<text x="938" y="535" class="ax">1.6758</text><text x="938" y="587" class="ax">0.00</text><text x="938" y="620" class="ax">-1.2172</text>
<path d="M940 512v34M936 512h8M936 546h8" stroke="#ccc" stroke-width="2"/>
<text x="943" y="145" class="ax">165.785</text><text x="943" y="242" class="ax">165.760</text><text x="943" y="356" class="ax">165.730</text><text x="943" y="472" class="ax">165.700</text>
<rect x="932" y="155" width="112" height="26" fill="#fff"/><text x="943" y="176" class="ax" style="fill:#000">165.777</text>
<text x="26" y="658" class="ax">30 Oct 2024</text><text x="218" y="658" class="ax">30 Oct 13:13</text><text x="410" y="658" class="ax">30 Oct 13:16</text><text x="602" y="658" class="ax">30 Oct 13:19</text>
</g>

<!-- chart tabs -->
<rect x="205" y="557" width="1075" height="2" fill="#7a7a7a"/>
<rect x="205" y="559" width="1075" height="20" fill="#f2f2f2"/>
<path d="M205 558.500h1075" stroke="#666"/>
<path d="M356 559v16.500h71V559" fill="#fff" stroke="#444"/>
<g font-size="10.500" fill="#999">
<text x="217" y="571" textLength="56" lengthAdjust="spacingAndGlyphs">AUDCAD,M1</text>
<text x="293" y="571" textLength="52" lengthAdjust="spacingAndGlyphs">EURUSD,M1</text>
<text x="364" y="571" textLength="53" lengthAdjust="spacingAndGlyphs" fill="#222">EURCAD,M1</text>
<text x="436" y="571" textLength="53" lengthAdjust="spacingAndGlyphs">GBPCAD,M1</text>
<text x="508" y="571" textLength="51" lengthAdjust="spacingAndGlyphs">AUDJPY,M1</text>
<text x="578" y="571" textLength="48" lengthAdjust="spacingAndGlyphs">EURJPY,M1</text>
</g>
<path d="M284.500 562v11M500.500 562v11M569.500 562v11M636.500 562v11" stroke="#c4c4c4"/>
<path d="M1259 587l-2 2 2 2M1271 587l2 2-2 2" fill="none" stroke="#aaa"/>
<path d="M6 579.500h1274" stroke="#d0d0d0"/>
<path d="M9.500 581.500l5 5M14.500 581.500l-5 5" stroke="#222" stroke-width="1.500"/>

<!-- terminal list -->
<rect x="20" y="580" width="1248" height="64" fill="#fff"/>
<rect x="20" y="613" width="1248" height="18" fill="#ececec"/>
<path d="M830.500 580v64M1201.500 580v64" stroke="#e2e2e2"/>
<rect x="1273" y="593" width="5" height="14" fill="#8e8e8e"/>
<g font-size="10.500" fill="#333">
<text x="24" y="593" textLength="27" lengthAdjust="spacingAndGlyphs">Name</text>
<text x="835" y="593" textLength="40" lengthAdjust="spacingAndGlyphs">Category</text>
<text x="1230" y="593" textLength="21" lengthAdjust="spacingAndGlyphs">Date</text>
<text x="38" y="610" textLength="257" lengthAdjust="spacingAndGlyphs">Connexus Helper (Part 5): HTTP Methods and Status Codes</text>
<text x="38" y="626.500" textLength="391" lengthAdjust="spacingAndGlyphs">Creating a Trading Administrator Panel in MQL5 (Part V): Two-Factor Authentication (2FA)</text>
<text x="38" y="643" textLength="288" lengthAdjust="spacingAndGlyphs">Developing a Replay System (Part 49): Things Get Complicated (I)</text>
<text x="833" y="610" textLength="168" lengthAdjust="spacingAndGlyphs">Examples, Integration, Expert Advisors</text>
<text x="833" y="626.500" textLength="226" lengthAdjust="spacingAndGlyphs">Examples, Trading systems, Expert Advisors, Experts</text>
<text x="833" y="643" textLength="247" lengthAdjust="spacingAndGlyphs">Examples, Tester, Trading systems, Statistics and analysis</text>
<text x="1218" y="610" textLength="46" lengthAdjust="spacingAndGlyphs">2024.10.28</text>
<text x="1218" y="626.500" textLength="46" lengthAdjust="spacingAndGlyphs">2024.10.24</text>
<text x="1218" y="643" textLength="46" lengthAdjust="spacingAndGlyphs">2024.10.23</text>
</g>
<path d="M1261 587h5l-2.500 4z" fill="none" stroke="#bbb"/>
<g fill="#fffbe0" stroke="#d8b050"><path d="M25.500 601.500h5l2 2v7h-7zM25.500 618.500h5l2 2v7h-7zM25.500 634.500h5l2 2v7h-7z"/></g>
<!-- terminal tabs -->
<rect x="6" y="644" width="1274" height="23" fill="#f2f2f2"/>
<rect x="20" y="644" width="1260" height="1.500" fill="#707070"/>
<rect x="7" y="626" width="13" height="40" fill="#d5dfe9"/>
<text transform="translate(16.500 662) rotate(-90)" font-size="9.500" fill="#333" textLength="35" lengthAdjust="spacingAndGlyphs">Terminal</text>
<path d="M520 644.500v16.500h48.500V644.500" fill="#fff" stroke="#444"/>
<g font-size="10.500" fill="#a0a0a0">
<text x="30" y="657" textLength="24" lengthAdjust="spacingAndGlyphs">Trade</text>
<text x="72" y="657" textLength="40" lengthAdjust="spacingAndGlyphs">Exposure</text>
<text x="128" y="657" textLength="71" lengthAdjust="spacingAndGlyphs">Account History</text>
<text x="215" y="657" textLength="25" lengthAdjust="spacingAndGlyphs">News</text>
<text x="256" y="657" textLength="25" lengthAdjust="spacingAndGlyphs">Alerts</text>
<text x="298" y="657" textLength="36" lengthAdjust="spacingAndGlyphs">Mailbox</text>
<text x="357" y="657" textLength="42" lengthAdjust="spacingAndGlyphs">Company</text>
<text x="416" y="657" textLength="31" lengthAdjust="spacingAndGlyphs">Market</text>
<text x="479" y="657" textLength="31" lengthAdjust="spacingAndGlyphs">Signals</text>
<text x="528" y="657" textLength="32" lengthAdjust="spacingAndGlyphs" fill="#222">Articles</text>
<text x="577" y="657" textLength="46" lengthAdjust="spacingAndGlyphs">Code Base</text>
<text x="640" y="657" textLength="31" lengthAdjust="spacingAndGlyphs">Experts</text>
<text x="688" y="657" textLength="32" lengthAdjust="spacingAndGlyphs">Journal</text>
</g>
<text x="337" y="660" font-size="8.500" font-weight="bold" fill="#b02030">7</text>
<text x="449" y="660" font-size="8.500" font-weight="bold" fill="#b02030">112</text>
<path d="M63.500 648v11M120.500 648v11M207.500 648v11M248.500 648v11M289.500 648v11M348.500 648v11M407.500 648v11M470.500 648v11M632.500 648v11M680.500 648v11M728.500 648v11" stroke="#c4c4c4"/>
<!-- status -->
<path d="M6 666.500h1274" stroke="#cfcfcf"/>
<rect x="6" y="667" width="1274" height="14" fill="#f2f2f2"/>
<text x="7" y="680" font-size="10.500" fill="#444" textLength="79" lengthAdjust="spacingAndGlyphs">For Help, press F1</text>
<text x="693" y="680" font-size="10.500" fill="#444" textLength="32" lengthAdjust="spacingAndGlyphs">Default</text>
<path d="M688.500 668v13M788.500 668v13M875.500 668v13M935.500 668v13M994.500 668v13M1050.500 668v13M1109.500 668v13M1164.500 668v13" stroke="#d6d6d6"/>
<rect x="1168" y="672" width="22" height="9" fill="#5d8a2c"/><path d="M1170 672v9M1173 672v9M1176 672v9M1179 672v9M1182 672v9M1185 672v9M1188 672v9" stroke="#c8c870"/>
<text x="1193" y="680" font-size="10.500" fill="#444" textLength="44" lengthAdjust="spacingAndGlyphs">5867/4 kb</text>

<!-- taskbar -->
<rect x="0" y="680" width="1280" height="40" fill="#cfe5ea"/>
<ellipse cx="24" cy="697" rx="7" ry="5" fill="#a8bfe0"/><ellipse cx="26" cy="706" rx="8" ry="4" fill="#e0a040"/><ellipse cx="30" cy="708" rx="7" ry="3" fill="#b8d0e8"/>
<circle cx="32" cy="691" r="6.500" fill="#c42026"/><text x="32" y="695" font-size="10" fill="#fff" font-weight="bold" text-anchor="middle">1</text>
<text x="43" y="697" font-size="10.500" fill="#333" textLength="19" lengthAdjust="spacingAndGlyphs">48°F</text>
<text x="43" y="711" font-size="10.500" fill="#555" textLength="58" lengthAdjust="spacingAndGlyphs">Partly cloudy</text>
<g fill="url(#win)"><rect x="298" y="691" width="9" height="9"/><rect x="308" y="691" width="9" height="9"/><rect x="298" y="701" width="9" height="9"/><rect x="308" y="701" width="9" height="9"/></g>
<rect x="330" y="688" width="180" height="25" rx="12.500" fill="#ecf4f6"/>
<circle cx="343" cy="699" r="4.500" fill="none" stroke="#222" stroke-width="1.500"/><path d="M346 703l4 4" stroke="#222" stroke-width="1.500"/>
<text x="360" y="705" font-size="12" fill="#555" textLength="34" lengthAdjust="spacingAndGlyphs">Search</text>
<path d="M478 693l5 3h8l5-3-1 9-4 6-2 1h-4l-3-2-3-6z" fill="#7a9a90"/><circle cx="484" cy="701" r="1.500" fill="#fff"/><circle cx="491" cy="701" r="1.500" fill="#fff"/><path d="M479 695l-3-3M495 695l3-3" stroke="#c09aa0" stroke-width="2"/>
<rect x="527" y="693" width="13" height="13" fill="#fff"/><rect x="522" y="697" width="15" height="12" fill="#222"/>
<path d="M566 692q6-3 8 1l5 8q1 5-5 6l-6 1q-6-2-6-7z" fill="#1f8fdc"/><path d="M563 696q3-5 8-3l1 7-6 4q-4-3-3-8z" fill="#e8443a"/><path d="M572 700l5-4 3 6-5 5z" fill="#f2c030"/><circle cx="569" cy="701" r="2.500" fill="#fff"/>
<path d="M597 691h7l2 3h8v16h-17z" fill="#f2c84a"/><rect x="597" y="702" width="17" height="8" fill="#eab32a"/><rect x="604" y="706" width="6" height="3" fill="#2f7ac0"/>
<circle cx="641.500" cy="700" r="9.500" fill="#1c84d8"/><path d="M633 697q8-10 17 0-6-3-9 1-3 4 3 9-9 1-11-10z" fill="#35c6a8"/><circle cx="645" cy="700" r="4" fill="#a0e0f4"/>
<rect x="670" y="692" width="16" height="17" rx="2" fill="#1f4e80"/><rect x="675" y="696" width="3" height="3" fill="#e84030"/><rect x="679" y="696" width="3" height="3" fill="#60b030"/><rect x="675" y="700" width="3" height="3" fill="#2090e0"/><rect x="679" y="700" width="3" height="3" fill="#f0b820"/>
<rect x="705" y="690" width="20" height="20" rx="1" fill="#1e88cf"/><circle cx="715" cy="700" r="7" fill="none" stroke="#fff"/><text x="715" y="702" font-size="5" fill="#fff" font-weight="bold" text-anchor="middle">DELL</text>
<path d="M743 711q1-12 16-20-3 9-8 13-4 2-8 7z" fill="#a47ad8"/>
<rect x="781" y="690" width="15" height="21" fill="#8a9aa4"/><rect x="783" y="692" width="11" height="4" fill="#d8e6ec"/><g fill="#e4ecf0"><rect x="783" y="698" width="3" height="3"/><rect x="787" y="698" width="3" height="3"/><rect x="791" y="698" width="3" height="3"/><rect x="783" y="702" width="3" height="3"/><rect x="787" y="702" width="3" height="3"/><rect x="791" y="702" width="3" height="3"/></g>
<rect x="810" y="684" width="31" height="32" rx="3" fill="#e2f0f2"/>
<path d="M817 692l4-2h8l4 2-1 11-7 6-7-6z" fill="#e8552a"/><path d="M821 698l4 2 4-2-2 6-2 2-2-2z" fill="#fff"/>
<rect x="819" y="714" width="12" height="2" fill="#2a7c88"/>
<circle cx="861.500" cy="700" r="8.500" fill="none" stroke="#1ea845" stroke-width="2.500"/><path d="M858 696q-1 5 3 7l3 1 1-2-2-1-1 1q-2-1-2-3l1-1-1-2z" fill="#1ea845"/>
<rect x="889" y="690" width="20" height="20" rx="3" fill="#111"/><path d="M892 696h7v8h-3v-5h-4zM900 696h7l-4 8h-3z" fill="#fff"/>
<circle cx="933" cy="700" r="8" fill="none" stroke="#2fb35c" stroke-width="3"/><path d="M933 694v12M937 700h4" stroke="#2fb35c" stroke-width="3"/>
<rect x="932" y="716" width="4" height="2" rx="1" fill="#666"/>
<circle cx="971" cy="702" r="8" fill="#1a1a1a"/><circle cx="971" cy="702" r="2" fill="#cfe5ea"/><circle cx="979" cy="693" r="5" fill="#d81818"/><rect x="969" y="716" width="4" height="2" rx="1" fill="#666"/>
<path d="M1048 702l4-4 4 4" fill="none" stroke="#222" stroke-width="1.300"/>
<path d="M1074 703q-3-4 2-6 3-3 6 0 3 1 2 4" fill="#778" stroke="#555"/><circle cx="1082" cy="704" r="3.500" fill="#e03030"/>
<rect x="1103" y="693" width="5" height="10" rx="2.500" fill="none" stroke="#556"/><path d="M1100 700q0 7 5.500 7t5.500-7M1105.500 707v3" fill="none" stroke="#556"/>
<path d="M1126 698q6-5 12 0M1128 701q4-3 8 0M1130 704q2-1 4 0" fill="none" stroke="#333"/><circle cx="1132" cy="706" r="1" fill="#333"/>
<path d="M1146 698h2l3-3v11l-3-3h-2z" fill="none" stroke="#333"/><path d="M1153 698q2 2.500 0 5M1155 696q3 4.500 0 9" fill="none" stroke="#333"/>
<path d="M1166 697l4-3 9 5v4h-13z" fill="#222"/><rect x="1176" y="699" width="3" height="3" fill="#e0c020"/>
<text x="1244" y="697" font-size="10.500" fill="#222" text-anchor="end" textLength="37" lengthAdjust="spacingAndGlyphs">6:20 AM</text>
<text x="1244" y="711" font-size="10.500" fill="#222" text-anchor="end" textLength="51" lengthAdjust="spacingAndGlyphs">10/30/2024</text>
<path d="M1253 704q2-2 2-6a3 3 0 0 1 6 0q0 4 2 6zM1256 706q2 2 4 0" fill="none" stroke="#333"/>
</svg>
</body></html>
